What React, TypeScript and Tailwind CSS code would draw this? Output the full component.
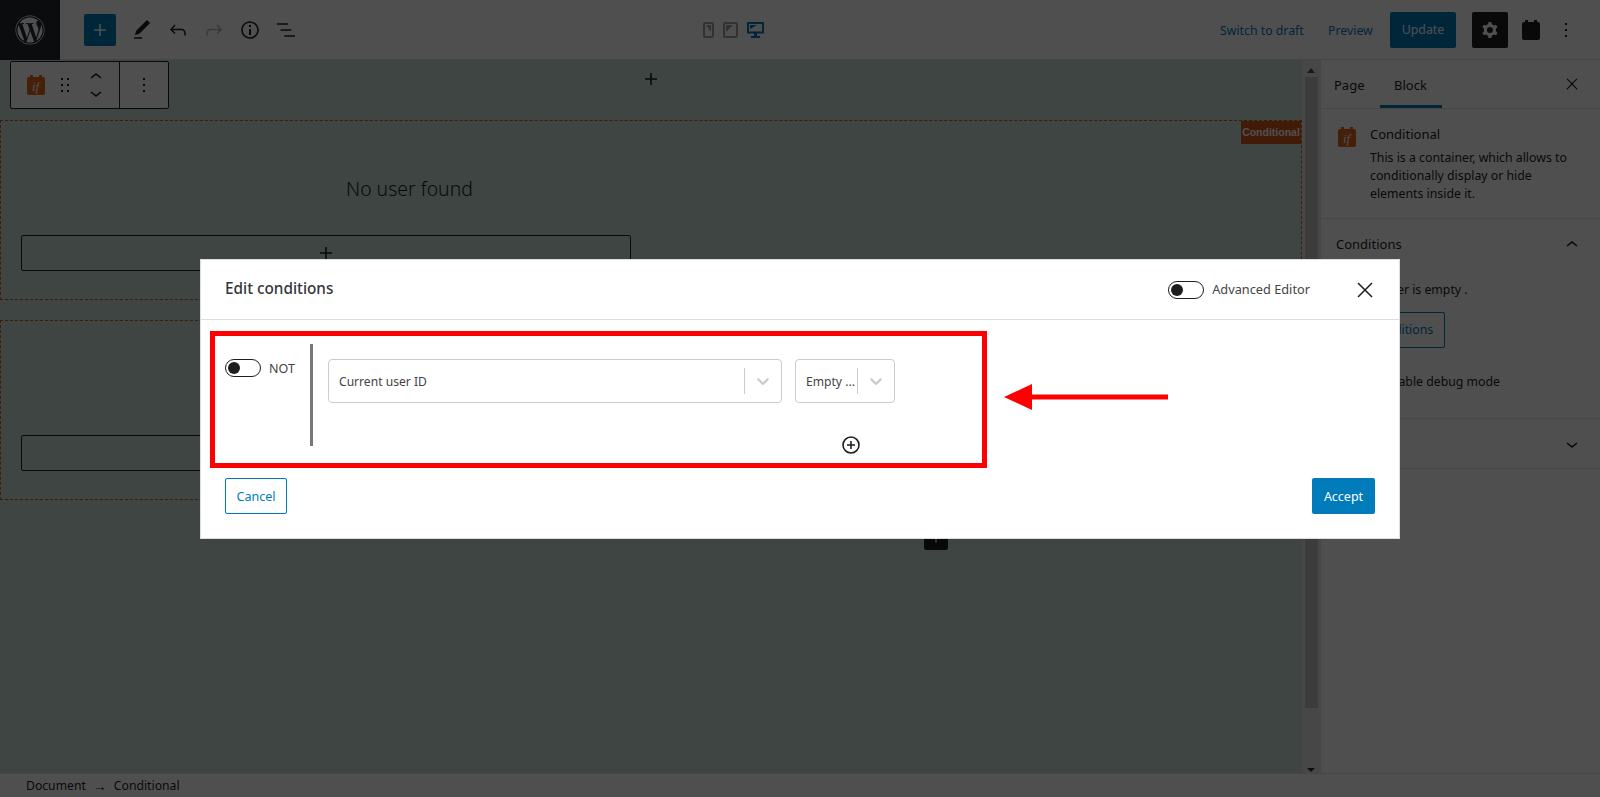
import React from 'react'
import { FaWordpress } from 'react-icons/fa'

const Wp = ({ d, size = 24, className = '' }: { d: string; size?: number; className?: string }) => (
  <svg width={size} height={size} viewBox="0 0 24 24" fill="currentColor" className={className}>
    <path fillRule="evenodd" d={d} />
  </svg>
)

const PLUS = 'M18 11.2h-5.2V6h-1.6v5.2H6v1.6h5.2V18h1.6v-5.2H18z'
const PENCIL = 'M20.1 5.1L16.9 2 6.2 12.7l-1.3 4.4 4.5-1.3L20.1 5.1zM4 20.8h8v-1.5H4v1.5z'
const UNDO = 'M18.3 11.7c-.6-.6-1.4-.9-2.3-.9H6.7l2.9-3.3-1.1-1-4.5 5L8.5 16l1-1-2.7-2.7H16c.5 0 .9.2 1.3.5 1 1 1 3.4 1 4.5v.3h1.5v-.2c0-1.5 0-4.3-1.5-5.7z'
const REDO = 'M15.6 6.5l-1.1 1 2.9 3.3H8c-.9 0-1.7.3-2.3.9-1.4 1.5-1.4 4.2-1.4 5.6v.2h1.5v-.3c0-1.1 0-3.5 1-4.5.3-.3.7-.5 1.3-.5h9.2L14.5 15l1.1 1.1 4.6-4.6-4.6-5z'
const INFO = 'M12 3.2c-4.8 0-8.8 3.9-8.8 8.8 0 4.8 3.9 8.8 8.8 8.8 4.8 0 8.8-3.9 8.8-8.8 0-4.8-4-8.8-8.8-8.8zm0 16c-4 0-7.2-3.3-7.2-7.2C4.8 8 8 4.8 12 4.8s7.2 3.3 7.2 7.2c0 4-3.2 7.2-7.2 7.2zM11 17h2v-6h-2v6zm0-8h2V7h-2v2z'
const LIST = 'M13.8 5.2H3v1.5h10.8V5.2zm-3.6 12v1.5H21v-1.5H10.2zm7.2-6H6.6v1.5h10.8v-1.5z'
const DRAG = 'M8 7h2V5H8v2zm0 6h2v-2H8v2zm0 6h2v-2H8v2zm6-14v2h2V5h-2zm0 8h2v-2h-2v2zm0 6h2v-2h-2v2z'
const MORE = 'M13 19h-2v-2h2v2zm0-6h-2v-2h2v2zm0-6h-2V5h2v2z'
const CLOSE = 'M13 11.8l6.1-6.3-1-1-6.1 6.2-6.1-6.2-1 1 6.1 6.3-6.5 6.7 1 1 6.5-6.6 6.5 6.6 1-1z'
const UP = 'M6.5 12.4L12 8l5.5 4.4-.9 1.2L12 10l-4.5 3.6-1-1.2z'
const DOWN = 'M17.5 11.6L12 16l-5.5-4.4.9-1.2L12 14l4.5-3.6 1 1.2z'
const COG = 'M10.289 4.836A1 1 0 0111.275 4h1.306a1 1 0 01.987.836l.244 1.466c.787.26 1.503.679 2.108 1.218l1.393-.522a1 1 0 011.216.437l.653 1.13a1 1 0 01-.23 1.273l-1.148.944a6.025 6.025 0 010 2.435l1.149.946a1 1 0 01.23 1.272l-.653 1.13a1 1 0 01-1.216.437l-1.394-.522c-.605.54-1.32.958-2.108 1.218l-.244 1.466a1 1 0 01-.987.836h-1.306a1 1 0 01-.986-.836l-.244-1.466a5.995 5.995 0 01-2.108-1.218l-1.394.522a1 1 0 01-1.217-.436l-.653-1.131a1 1 0 01.23-1.272l1.149-.946a6.026 6.026 0 010-2.435l-1.148-.944a1 1 0 01-.23-1.272l.653-1.131a1 1 0 011.217-.437l1.393.522a5.994 5.994 0 012.108-1.218l.244-1.466zM14.929 12a3 3 0 11-6 0 3 3 0 016 0z'

const IfIcon = ({ color = '#e0651f', label = true, className = '' }: { color?: string; label?: boolean; className?: string }) => (
  <svg width="18" height="20" viewBox="0 0 18 20" className={`shrink-0 ${className}`}>
    <path fill={color} d="M3 0h3v2h6V0h3v2h1a2 2 0 0 1 2 2v14a2 2 0 0 1-2 2H2a2 2 0 0 1-2-2V4a2 2 0 0 1 2-2h1z" />
    {label && (
      <text x="8.5" y="15.5" textAnchor="middle" fontSize="13" fontStyle="italic" fontFamily="Liberation Serif, serif" fill="#ffffff">
        if
      </text>
    )}
  </svg>
)

const Devices = () => (
  <div className="flex items-center gap-[9px]">
    <svg width="11" height="16" viewBox="0 0 11 16">
      <rect x="1" y="1" width="9" height="14" rx="1" fill="#ffffff" stroke="#a0a0a0" strokeWidth="2" />
      <path d="M8 3v7L3 3z" fill="#a0a0a0" />
    </svg>
    <svg width="15" height="16" viewBox="0 0 15 16">
      <rect x="1" y="1" width="13" height="14" rx="1" fill="#ffffff" stroke="#a0a0a0" strokeWidth="2" />
      <path d="M3 3h7L3 10z" fill="#a0a0a0" />
    </svg>
    <svg width="17" height="16" viewBox="0 0 17 16">
      <path d="M1 1h15v9.5H1z" fill="none" stroke="#007cba" strokeWidth="2" />
      <path d="M3 3h7L3 7z" fill="#007cba" />
      <path d="M7 11h3v3H7zM4 14h9v2H4z" fill="#007cba" />
    </svg>
  </div>
)

const Toggle = () => (
  <span className="flex h-[18px] w-[36px] shrink-0 items-center rounded-full border border-[#1e1e1e] bg-white pl-[2px]">
    <span className="h-[12px] w-[12px] rounded-full bg-[#1e1e1e]" />
  </span>
)

const Select = ({ label, width, sep }: { label: string; width: string; sep: string }) => (
  <div className={`flex h-[44px] items-center rounded-[4px] border border-[#cccccc] pl-[10px] text-[12.1px] text-[#444444] ${width}`}>
    <span className="flex-1 truncate pt-[2px]">{label}</span>
    <span className={`h-[26px] w-px bg-[#cccccc] ${sep}`} />
    <svg width="20" height="20" viewBox="0 0 20 20" className="mx-[8px]" fill="#cccccc">
      <path d="M4.516 7.548c.436-.446 1.043-.481 1.576 0L10 11.295l3.908-3.747c.533-.481 1.141-.446 1.574 0 .436.445.408 1.197 0 1.615-.406.418-4.695 4.502-4.695 4.502a1.095 1.095 0 0 1-1.576 0S5.122 9.581 4.516 9.163c-.41-.418-.436-1.17 0-1.615z" />
    </svg>
  </div>
)

const ConditionalBox = ({ tag, text, plus }: { tag?: boolean; text?: boolean; plus?: boolean }) => (
  <div className="relative flex h-[180px] flex-col border border-dashed border-[#d4561a]">
    {tag && (
      <span className="absolute right-0 top-0 flex h-[23px] w-[60px] items-center justify-center bg-[#d4561a] font-['Liberation_Sans',sans-serif] text-[10.5px] font-bold text-white">
        Conditional
      </span>
    )}
    <p className="ml-[345px] mt-[54px] h-[28px] w-[130px] whitespace-nowrap text-[19.4px] font-light leading-[28px] text-[#1e1e1e]">
      {text ? 'No user found' : ''}
    </p>
    <div className="ml-[20px] mt-[32px] flex h-[36px] w-[610px] items-center justify-center rounded-[2px] border border-[#1e1e1e] text-[#1e1e1e]">
      {plus && <Wp d={PLUS} />}
    </div>
  </div>
)

const App = () => {
  return (
    <div className="relative flex h-[797px] w-[1600px] flex-col overflow-hidden bg-white font-['Noto_Sans',sans-serif] text-[13px] text-[#1e1e1e]">
      <header className="flex h-[60px] items-center border-b border-[#e0e0e0]">
        <div className="flex h-[60px] w-[60px] items-center justify-center bg-[#23282d] text-[#ffffff]">
          <FaWordpress size={30} />
        </div>
        <button className="ml-[24px] flex h-[32px] w-[32px] items-center justify-center rounded-[2px] bg-[#007cba] text-white">
          <Wp d={PLUS} />
        </button>
        <Wp d={PENCIL} className="ml-[14px]" />
        <Wp d={UNDO} className="ml-[12px]" />
        <Wp d={REDO} className="ml-[12px] text-[#bbbbbb]" />
        <Wp d={INFO} className="ml-[12px]" />
        <Wp d={LIST} className="ml-[12px]" />
        <div className="ml-[405px]">
          <Devices />
        </div>
        <a className="ml-[456px] w-[84px] whitespace-nowrap pt-[3px] text-[12.3px] text-[#007cba]">Switch to draft</a>
        <a className="ml-[24px] w-[44px] pt-[3px] text-[12.3px] text-[#007cba]">Preview</a>
        <button className="ml-[18px] h-[36px] w-[66px] rounded-[2px] bg-[#007cba] pt-[2px] text-[12.3px] text-white">Update</button>
        <button className="ml-[16px] flex h-[36px] w-[36px] items-center justify-center rounded-[2px] bg-[#1e1e1e] text-white">
          <Wp d={COG} />
        </button>
        <span className="ml-[14px] flex">
          <IfIcon color="#1e1e1e" label={false} />
        </span>
        <Wp d={MORE} className="ml-[14px]" />
      </header>

      <div className="flex min-h-0 flex-1">
        <main className="flex min-w-0 flex-1 bg-[#cbdfd9]">
          <div className="relative flex min-w-0 flex-1 flex-col">
            <div className="grid h-[60px] grid-cols-[1fr_auto_1fr] items-start">
              <div className="ml-[10px] mt-px flex h-[48px] w-[159px] rounded-[2px] border border-[#1e1e1e] bg-white">
                <div className="flex w-[109px] items-center border-r border-[#1e1e1e] pl-[16px]">
                  <IfIcon />
                  <Wp d={DRAG} className="ml-[8px]" />
                  <div className="ml-[7px] flex flex-col">
                    <Wp d={UP} className="-mb-[4px]" />
                    <Wp d={DOWN} className="-mt-[4px]" />
                  </div>
                </div>
                <div className="flex flex-1 items-center justify-center">
                  <Wp d={MORE} />
                </div>
              </div>
              <Wp d={PLUS} className="mt-[7px]" />
              <span />
            </div>
            <ConditionalBox tag text plus />
            <div className="mt-[20px]">
              <ConditionalBox />
            </div>
            <span className="absolute left-[924px] top-[466px] flex h-[24px] w-[24px] items-center justify-center rounded-[2px] bg-[#1e1e1e] text-white">
              <Wp d={PLUS} size={18} />
            </span>
          </div>
          <div className="flex w-[18px] flex-col items-center bg-[#e6e6e6]">
            <span className="mt-[8px] h-0 w-0 border-x-[4px] border-b-[5px] border-x-transparent border-b-[#505050]" />
            <span className="mt-[4px] h-[631px] w-[13px] bg-[#c1c1c1]" />
            <span className="mb-[1px] mt-auto h-0 w-0 border-x-[4px] border-t-[4px] border-x-transparent border-t-[#303030]" />
          </div>
        </main>

        <aside className="w-[280px] border-l border-[#e0e0e0] bg-white">
          <div className="flex h-[49px] items-stretch border-b border-[#e0e0e0] pl-[13px]">
            <span className="flex items-center pt-[4px] text-[#1e1e1e]">Page</span>
            <span className="ml-[15px] flex w-[62px] items-center justify-center border-b-[3px] border-[#007cba] pt-[6px]">Block</span>
            <Wp d={CLOSE} size={18} className="ml-auto mr-[19px] self-center" />
          </div>
          <div className="flex h-[110px] border-b border-[#e0e0e0] pl-[17px] pr-[15px] pt-[17px]">
            <IfIcon className="mt-px" />
            <div className="ml-[14px]">
              <p className="-mt-px text-[13px] leading-[18px]">Conditional</p>
              <p className="mt-[6px] text-[12.3px] leading-[18px]">
                This is a container, which allows to conditionally display or hide elements inside it.
              </p>
            </div>
          </div>
          <div className="h-[200px] border-b border-[#e0e0e0] px-[15px]">
            <div className="flex h-[52px] items-center justify-between">
              <span>Conditions</span>
              <Wp d={UP} className="mr-[1px]" />
            </div>
            <p className="mt-[10px] text-[12.3px] leading-[18px]">Current user is empty .</p>
            <button className="mt-[13px] h-[36px] w-[109px] rounded-[2px] border border-[#007cba] text-[12.3px] text-[#007cba]">Edit conditions</button>
            <div className="mt-[25px] flex items-center">
              <Toggle />
              <p className="ml-[12px] text-[12.3px] leading-[18px]">Enable debug mode</p>
            </div>
          </div>
          <div className="flex h-[50px] items-center justify-between border-b border-[#e0e0e0] px-[15px]">
            <span>Advanced</span>
            <Wp d={DOWN} className="mr-[1px]" />
          </div>
        </aside>
      </div>

      <footer className="flex h-[24px] items-center border-t border-[#e0e0e0] pl-[26px] pt-[1px] text-[12.2px]">
        <span>Document</span>
        <span className="ml-[7px] text-[14px] leading-none">→</span>
        <span className="ml-[7px]">Conditional</span>
      </footer>

      <div className="absolute inset-0 flex items-start justify-center bg-black/[0.69] pt-[259px]">
        <div className="relative h-[280px] w-[1200px] border border-[#dddddd] bg-white text-[#444444]">
          <div className="flex h-[60px] items-center border-b border-[#dddddd] pl-[24px] pr-[24px]">
            <h1 className="pb-[2px] text-[15.3px] font-medium text-[#32373c]">Edit conditions</h1>
            <div className="ml-auto flex items-center">
              <Toggle />
              <span className="ml-[8px] text-[12.75px]">Advanced Editor</span>
              <svg width="16" height="16" viewBox="0 0 16 16" className="ml-[47px] mr-[2px]" stroke="#1e1e1e" strokeWidth="1.5">
                <path d="M1 1l14 14M15 1L1 15" />
              </svg>
            </div>
          </div>

          <div className="mt-[24px] flex h-[102px] pl-[24px]">
            <div className="flex h-full w-[85px] items-start pt-[15px]">
              <Toggle />
              <span className="ml-[8px] pt-[1px] text-[12.5px] leading-[18px]">NOT</span>
            </div>
            <div className="h-full w-[3px] bg-[#777777]" />
            <div className="ml-[15px] flex w-[567px] flex-col pt-[15px]">
              <div className="flex gap-[13px]">
                <Select label="Current user ID" width="w-[454px]" sep="" />
                <Select label="Empty ..." width="w-[100px]" sep="-ml-[10px]" />
              </div>
              <svg width="18" height="18" viewBox="0 0 18 18" className="ml-[514px] mt-[33px] shrink-0">
                <circle cx="9" cy="9" r="8" fill="none" stroke="#1e1e1e" strokeWidth="1.6" />
                <path d="M9 5v8M5 9h8" stroke="#1e1e1e" strokeWidth="1.6" />
              </svg>
            </div>
          </div>

          <div className="mt-[32px] flex justify-between px-[24px]">
            <button className="h-[36px] w-[62px] rounded-[2px] border border-[#007cba] pt-[2px] text-[12.5px] text-[#007cba]">Cancel</button>
            <button className="h-[36px] w-[63px] rounded-[2px] bg-[#007cba] pt-[2px] text-[12.5px] text-white">Accept</button>
          </div>

          {/* annotation drawn over the dialog */}
          <div className="absolute left-[9px] top-[71px] h-[137px] w-[777px] border-[5px] border-[#ff0000]" />
          <svg width="164" height="28" viewBox="0 0 164 28" className="absolute left-[803px] top-[123px]">
            <path d="M0 14L28 1v10.5h136v5H28V27z" fill="#ff0000" />
          </svg>
        </div>
      </div>
    </div>
  )
}

export default App
